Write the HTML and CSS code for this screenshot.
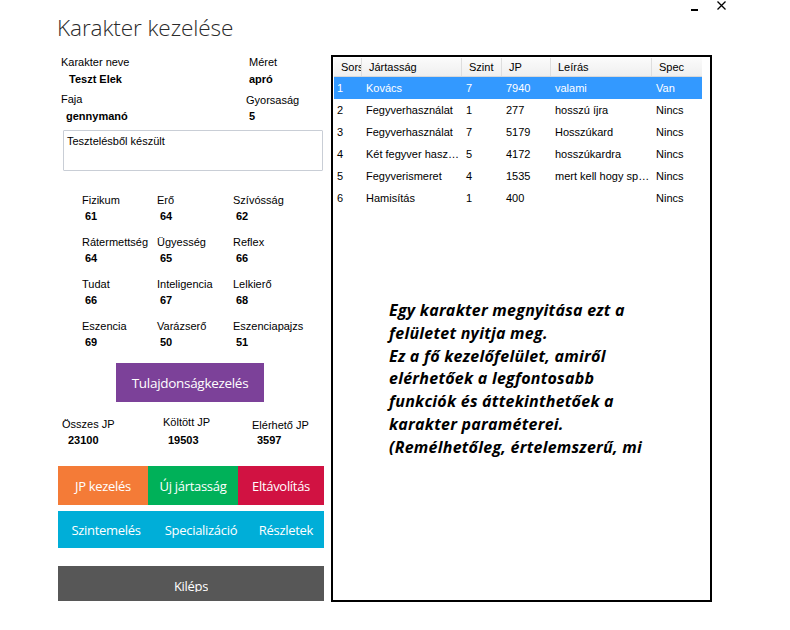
FILE: index.html
```html
<!DOCTYPE html>
<html lang="hu">
<head>
<meta charset="utf-8">
<title>Karakter kezelése</title>
<link rel="stylesheet" href="styles.css">
</head>
<body>
<div class="window">
  <header class="titlebar">
    <h1 class="title">Karakter kezelése</h1>
    <div class="controls">
      <svg class="ctl-min" width="10" height="12" viewBox="0 0 10 12"><rect x="1" y="9" width="7" height="2" fill="#000"/></svg>
      <svg class="ctl-close" width="11" height="12" viewBox="0 0 11 12"><path d="M1.5 1.5 L9.5 9.5 M9.5 1.5 L1.5 9.5" stroke="#000" stroke-width="1.3" fill="none"/></svg>
    </div>
  </header>

  <main class="main">
    <section class="left">
      <div class="info-row">
        <div class="field field-a">
          <div class="lbl">Karakter neve</div>
          <div class="val val-name">Teszt Elek</div>
        </div>
        <div class="field">
          <div class="lbl">Méret</div>
          <div class="val val-flush">apró</div>
        </div>
      </div>
      <div class="info-row info-row2">
        <div class="field field-a">
          <div class="lbl">Faja</div>
          <div class="val val-race">gennymanó</div>
        </div>
        <div class="field field-speed">
          <div class="lbl lbl-speed">Gyorsaság</div>
          <div class="val val-flush">5</div>
        </div>
      </div>

      <div class="notes">Tesztelésből készült</div>

      <div class="stats">
        <div class="stat"><div class="lbl">Fizikum</div><div class="val">61</div></div>
        <div class="stat"><div class="lbl">Erő</div><div class="val">64</div></div>
        <div class="stat"><div class="lbl">Szívósság</div><div class="val">62</div></div>
        <div class="stat"><div class="lbl">Rátermettség</div><div class="val">64</div></div>
        <div class="stat"><div class="lbl">Ügyesség</div><div class="val">65</div></div>
        <div class="stat"><div class="lbl">Reflex</div><div class="val">66</div></div>
        <div class="stat"><div class="lbl">Tudat</div><div class="val">66</div></div>
        <div class="stat"><div class="lbl">Inteligencia</div><div class="val">67</div></div>
        <div class="stat"><div class="lbl">Lelkierő</div><div class="val">68</div></div>
        <div class="stat"><div class="lbl">Eszencia</div><div class="val">69</div></div>
        <div class="stat"><div class="lbl">Varázserő</div><div class="val">50</div></div>
        <div class="stat"><div class="lbl">Eszenciapajzs</div><div class="val">51</div></div>
      </div>

      <button class="btn btn-purple">Tulajdonságkezelés</button>

      <div class="jp">
        <div class="jp-item jp-total"><div class="lbl">Összes JP</div><div class="val">23100</div></div>
        <div class="jp-item jp-spent"><div class="lbl">Költött JP</div><div class="val">19503</div></div>
        <div class="jp-item jp-avail"><div class="lbl">Elérhető JP</div><div class="val">3597</div></div>
      </div>

      <div class="btn-row btn-row1">
        <button class="btn btn-orange">JP kezelés</button>
        <button class="btn btn-green">Új jártasság</button>
        <button class="btn btn-red">Eltávolítás</button>
      </div>
      <div class="btn-row btn-row2">
        <button class="btn btn-cyan b-level">Szintemelés</button>
        <button class="btn btn-cyan b-spec">Specializáció</button>
        <button class="btn btn-cyan b-detail">Részletek</button>
      </div>
      <button class="btn btn-exit"><span class="exit-label">Kiléps</span></button>
    </section>

    <section class="grid-panel">
      <div class="grid">
        <div class="grid-head">
          <div class="c c1">Sors</div>
          <div class="c c2">Jártasság</div>
          <div class="c c3">Szint</div>
          <div class="c c4">JP</div>
          <div class="c c5">Leírás</div>
          <div class="c c6">Spec</div>
        </div>
        <div class="grid-row selected">
          <div class="c c1">1</div><div class="c c2">Kovács</div><div class="c c3">7</div><div class="c c4">7940</div><div class="c c5">valami</div><div class="c c6">Van</div>
        </div>
        <div class="grid-row">
          <div class="c c1">2</div><div class="c c2">Fegyverhasználat</div><div class="c c3">1</div><div class="c c4">277</div><div class="c c5">hosszú íjra</div><div class="c c6">Nincs</div>
        </div>
        <div class="grid-row">
          <div class="c c1">3</div><div class="c c2">Fegyverhasználat</div><div class="c c3">7</div><div class="c c4">5179</div><div class="c c5">Hosszúkard</div><div class="c c6">Nincs</div>
        </div>
        <div class="grid-row">
          <div class="c c1">4</div><div class="c c2">Két fegyver használata</div><div class="c c3">5</div><div class="c c4">4172</div><div class="c c5">hosszúkardra</div><div class="c c6">Nincs</div>
        </div>
        <div class="grid-row">
          <div class="c c1">5</div><div class="c c2">Fegyverismeret</div><div class="c c3">4</div><div class="c c4">1535</div><div class="c c5">mert kell hogy specializáljon</div><div class="c c6">Nincs</div>
        </div>
        <div class="grid-row">
          <div class="c c1">6</div><div class="c c2">Hamisítás</div><div class="c c3">1</div><div class="c c4">400</div><div class="c c5"></div><div class="c c6">Nincs</div>
        </div>
      </div>
      <p class="note">Egy karakter megnyitása ezt a<br>felületet nyitja meg.<br>Ez a fő kezelőfelület, amiről<br>elérhetőek a legfontosabb<br>funkciók és áttekinthetőek a<br>karakter paraméterei.<br>(Remélhetőleg, értelemszerű, mi</p>
    </section>
  </main>
</div>
</body>
</html>
```

FILE: styles.css
```css
* { box-sizing: border-box; }

html, body {
  margin: 0;
  padding: 0;
  background: #fff;
}

body {
  width: 790px;
  height: 630px;
  overflow: hidden;
  font-family: "Liberation Sans", Arial, sans-serif;
  font-size: 11px;
  color: #000;
}

.window {
  width: 790px;
  height: 630px;
}

/* title bar */
.titlebar {
  display: flex;
  align-items: flex-start;
  height: 55px;
  padding-left: 57px;
}

.title {
  margin: 13px 0 0 0;
  font-family: "Open Sans", "Noto Sans", sans-serif;
  font-weight: 300;
  font-size: 22.6px;
  line-height: 30px;
  color: #2b2b2b;
  letter-spacing: -0.1px;
}

.controls {
  margin-left: auto;
  margin-right: 63px;
  display: flex;
  gap: 16px;
}

.ctl-min { display: block; }
.ctl-close { display: block; }

/* main */
.main {
  display: flex;
  padding-left: 58px;
  gap: 7px;
}

.left {
  width: 266px;
  padding-top: 1px;
  display: flex;
  flex-direction: column;
}

.lbl {
  line-height: 13px;
  white-space: nowrap;
}

.val {
  line-height: 13px;
  font-weight: bold;
  margin-top: 4px;
  white-space: nowrap;
}

.info-row {
  display: flex;
  padding-left: 3px;
}

.info-row2 { margin-top: 7px; }

.field-a { width: 188px; }
.val-name { padding-left: 8px; }
.val-race { padding-left: 5px; }
.val-flush { padding-left: 0; }
.field-speed { margin-left: -3px; }
.field-speed .val { padding-left: 3px; }
.lbl-speed { margin-top: 1px; margin-bottom: -1px; }

.notes {
  margin: 7px 0 0 5px;
  width: 260px;
  height: 41px;
  border: 1px solid #c9ced6;
  border-radius: 1px;
  padding: 4px 3px;
  line-height: 13px;
}

.stats {
  margin-top: 23px;
  padding-left: 24px;
  display: grid;
  grid-template-columns: 75px 76px 70px;
  row-gap: 13px;
}

.stat .val {
  margin-top: 3px;
  padding-left: 3px;
}

/* buttons */
.btn {
  border: 0;
  margin: 0;
  padding: 0;
  color: #fff;
  font-family: "Open Sans", "Noto Sans", sans-serif;
  font-size: 13px;
  letter-spacing: -0.3px;
  display: flex;
  align-items: center;
  justify-content: center;
  cursor: default;
}

.btn-purple {
  margin: 14px 0 0 58px;
  width: 148px;
  height: 39px;
  background: #7c4199;
  font-size: 13.5px;
}

.jp {
  display: flex;
  margin-top: 14px;
  padding-left: 4px;
  align-items: flex-start;
}

.jp-item .val { margin-top: 3px; }
.jp-total { width: 101px; padding-top: 2px; }
.jp-total .val { padding-left: 6px; }
.jp-spent { width: 89px; padding-top: 0; }
.jp-spent .val { padding-left: 5px; margin-top: 5px; }
.jp-avail { padding-top: 3px; }
.jp-avail .val { padding-left: 5px; margin-top: 2px; }

.btn-row {
  display: flex;
}

.btn-row1 {
  margin-top: 19px;
  height: 39px;
}

.btn-row1 .btn { height: 39px; }
.btn-orange { width: 90px; background: #f47b37; }
.btn-green { width: 90px; background: #00b159; }
.btn-red { width: 86px; background: #d11242; }

.btn-row2 {
  margin-top: 6px;
  height: 37px;
  background: #00aed8;
}

.btn-cyan { height: 37px; background: #00aed8; }
.b-level { width: 96px; }
.b-spec { width: 94px; }
.b-detail { width: 76px; }

.btn-exit {
  margin-top: 18px;
  width: 266px;
  height: 35px;
  background: #575757;
  align-items: flex-start;
  padding-top: 11px;
}

.exit-label {
  display: block;
  height: 15px;
  line-height: 18px;
  overflow: hidden;
}

/* grid panel */
.grid-panel {
  width: 381px;
  height: 547px;
  border: 2px solid #000;
  padding: 1px 0 0 1px;
  overflow: hidden;
}

.grid {
  width: 368px;
}

.grid-head, .grid-row {
  display: flex;
}

.grid-head {
  height: 19px;
  background: linear-gradient(#fbfbfb, #efefef);
  border-bottom: 1px solid #d8d8d8;
}

.grid-head .c {
  line-height: 18px;
  padding-left: 7px;
  border-right: 1px solid #dedede;
}

.grid-head .c6 { border-right: 0; }

.c {
  overflow: hidden;
  white-space: nowrap;
  text-overflow: ellipsis;
}

.c1 { width: 28px; }
.c2 { width: 100px; }
.c3 { width: 40px; }
.c4 { width: 49px; }
.c5 { width: 101px; }
.c6 { width: 50px; }

.grid-head .c1 { text-overflow: clip; padding-left: 7px; }

.grid-row {
  height: 22px;
}

.grid-row .c {
  line-height: 23px;
  padding-left: 4px;
}

.grid-row .c1 { padding-left: 3px; text-overflow: clip; }

.grid-row.selected {
  background: #3399ff;
  color: #fff;
}

.note {
  margin: 90px 0 0 55px;
  font-family: "Open Sans", "Noto Sans", sans-serif;
  font-weight: bold;
  font-style: italic;
  font-size: 16px;
  line-height: 22.8px;
  letter-spacing: 0.25px;
  color: #000;
  white-space: nowrap;
}
```
